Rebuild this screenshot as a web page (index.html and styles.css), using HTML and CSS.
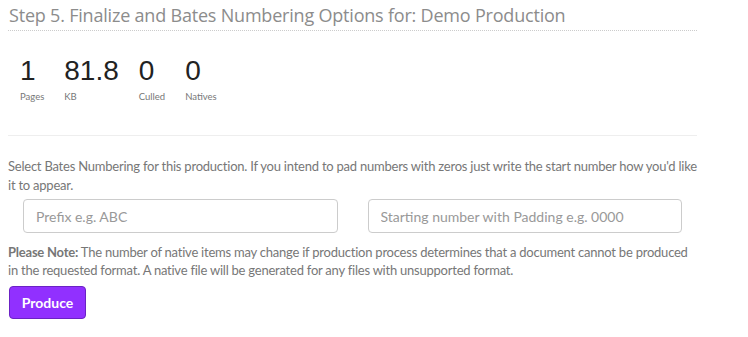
FILE: index.html
```html
<!DOCTYPE html>
<html lang="en">
<head>
    <meta charset="UTF-8">
    <title>Finalize Production</title>
    <link rel="stylesheet" href="styles.css">
</head>
<body>
    <div class="step-panel">
        <h3 class="step-title">Step 5. Finalize and Bates Numbering Options for: Demo Production</h3>

        <div class="stats">
            <div class="stat">
                <div class="stat-value">1</div>
                <div class="stat-label">Pages</div>
            </div>
            <div class="stat">
                <div class="stat-value">81.8</div>
                <div class="stat-label">KB</div>
            </div>
            <div class="stat">
                <div class="stat-value">0</div>
                <div class="stat-label">Culled</div>
            </div>
            <div class="stat">
                <div class="stat-value">0</div>
                <div class="stat-label">Natives</div>
            </div>
        </div>

        <hr class="divider">

        <p class="intro">Select Bates Numbering for this production. If you intend to pad numbers with zeros just write the start number how you'd like it to appear.</p>

        <div class="bates-row">
            <div class="bates-col">
                <input type="text" class="field" placeholder="Prefix e.g. ABC">
            </div>
            <div class="bates-col">
                <input type="text" class="field" placeholder="Starting number with Padding e.g. 0000">
            </div>
        </div>

        <p class="note"><strong>Please Note:</strong> The number of native items may change if production process determines that a document cannot be produced in the requested format. A native file will be generated for any files with unsupported format.</p>

        <button class="produce-btn">Produce</button>
    </div>
</body>
</html>
```

FILE: styles.css
```css
* {
    box-sizing: border-box;
}
body {
    margin: 0;
    padding: 0 8px;
    background: #fff;
    font-family: 'Lato', sans-serif;
    color: #777;
}
.step-panel {
    width: 689px;
}
.step-title {
    margin: 0;
    padding: 3px 0 3px 1px;
    font-family: 'Open Sans', sans-serif;
    font-weight: 400;
    font-size: 18px;
    line-height: 24px;
    letter-spacing: -0.2px;
    color: #8c8c8c;
    border-bottom: 1px dotted #ccc;
}
.stats {
    display: flex;
    padding: 25px 0 0 12px;
}
.stat {
    margin-right: 20px;
}
.stat-value {
    font-family: 'Liberation Sans', sans-serif;
    font-size: 28px;
    line-height: 30px;
    color: #222;
}
.stat-label {
    font-size: 9.5px;
    line-height: 12px;
    margin-top: 5px;
    color: #777;
}
.divider {
    margin: 32px 0 21px;
    border: 0;
    border-top: 1px solid #eee;
}
.intro {
    margin: 0 0 4px;
    font-size: 13px;
    line-height: 19px;
    letter-spacing: -0.23px;
}
.bates-row {
    display: grid;
    grid-template-columns: 1fr 1fr;
}
.bates-col {
    padding: 0 15px;
}
.field {
    display: block;
    width: 100%;
    height: 34px;
    padding: 6px 12px;
    font-family: 'Lato', sans-serif;
    font-size: 14px;
    color: #555;
    border: 1px solid #ccc;
    border-radius: 4px;
    outline: none;
}
.field::placeholder {
    color: #999;
}
.note {
    margin: 10px 0 7px;
    font-size: 13px;
    line-height: 18px;
    letter-spacing: -0.23px;
}
.note strong {
    font-weight: 700;
}
.produce-btn {
    display: block;
    margin-left: 1px;
    width: 77px;
    height: 33px;
    padding: 0;
    font-family: 'Lato', sans-serif;
    font-weight: 700;
    font-size: 14px;
    color: #fff;
    background: #9130ff;
    border: 1px solid #6b22c4;
    border-radius: 4px;
}
```
